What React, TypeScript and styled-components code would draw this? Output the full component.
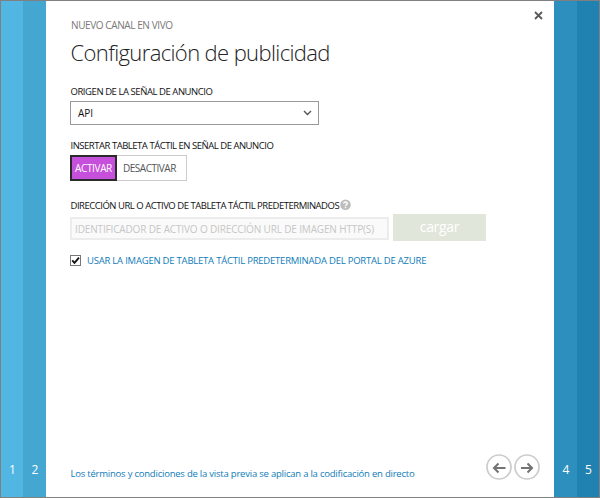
import React, { useState } from "react";
import styled, { createGlobalStyle } from "styled-components";

const GlobalStyle = createGlobalStyle`
  * { box-sizing: border-box; }
  body { margin: 0; }
  button, input { font: inherit; margin: 0; }
`;

const Frame = styled.div`
  display: flex;
  width: 600px;
  height: 498px;
  border: 1px solid #808080;
  background: #fff;
  font-family: "Open Sans", "Noto Sans", sans-serif;
  font-size: 10px;
  line-height: 14px;
  color: #111;
  overflow: hidden;
  white-space: nowrap;
`;

const Step = styled.div<{ $color: string; $width: number }>`
  display: flex;
  flex: none;
  align-items: flex-end;
  justify-content: center;
  width: ${(p) => p.$width}px;
  padding: 0 0 19px 1px;
  background: ${(p) => p.$color};
  color: #fff;
  font-size: 12px;
  line-height: 16px;
`;

const Panel = styled.main`
  display: flex;
  flex: 1;
  flex-direction: column;
  min-width: 0;
  padding: 9px 14px 16px 24px;
`;

const Header = styled.header`
  display: flex;
  justify-content: space-between;
  height: 61px;
  margin-right: -5px;
`;

const Eyebrow = styled.div`
  padding: 8px 0 0 1px;
  color: #777;
  letter-spacing: -0.4px;
`;

const Title = styled.h1`
  margin: 5px 0 0;
  padding-left: 0.5px;
  font-size: 22px;
  font-weight: 300;
  line-height: 30px;
  color: #222;
  letter-spacing: -0.62px;
`;

const CloseButton = styled.button`
  display: flex;
  width: 12px;
  height: 12px;
  padding: 0;
  border: 0;
  background: none;
`;

const Field = styled.section<{ $height: number }>`
  height: ${(p) => p.$height}px;
  padding-top: 14px;
`;

const Label = styled.div<{ $spacing: number }>`
  display: flex;
  align-items: center;
  height: 14px;
  padding-left: 0.5px;
  font-size: 9.5px;
  letter-spacing: ${(p) => p.$spacing}px;
`;

const Select = styled.div`
  display: flex;
  align-items: center;
  justify-content: space-between;
  width: 249px;
  height: 24px;
  margin-top: 2px;
  padding: 0 6px 0 7px;
  border: 1px solid #999;
`;

const Toggle = styled.div`
  display: flex;
  width: 117px;
  height: 26px;
  margin-top: 2px;
`;

const Option = styled.button<{ $on: boolean }>`
  flex: ${(p) => (p.$on ? "none" : "1")};
  width: 47px;
  padding: 0 0 0 ${(p) => (p.$on ? 3 : 6)}px;
  border: ${(p) => (p.$on ? "2px solid #2a2a2a" : "1px solid #ccc")};
  border-left-width: ${(p) => (p.$on ? 2 : 0)}px;
  background: ${(p) => (p.$on ? "#c64fdb" : "#fff")};
  color: ${(p) => (p.$on ? "#fff" : "#555")};
  text-align: left;
  letter-spacing: ${(p) => (p.$on ? -0.35 : -0.48)}px;
`;

const UploadRow = styled.div`
  display: flex;
  align-items: center;
  gap: 4px;
  margin-top: 1px;
`;

const UrlInput = styled.input`
  width: 319px;
  height: 23px;
  margin-top: 2px;
  padding: 0 3px;
  border: 2px solid #ececec;
  background: #fafafa;
  outline: none;
  letter-spacing: -0.15px;
  &::placeholder { color: #c6c6c6; opacity: 1; }
`;

const UploadButton = styled.button`
  width: 93px;
  height: 27px;
  padding: 0 0 1px;
  border: 0;
  background: #e0e6da;
  color: #fff;
  font-size: 14px;
  line-height: 20px;
  letter-spacing: -0.3px;
`;

const CheckRow = styled.div`
  display: flex;
  align-items: center;
  gap: 6px;
  height: 14px;
  margin-top: 12px;
  color: #0f7cb9;
  font-size: 9.5px;
  letter-spacing: -0.22px;
`;

const CheckText = styled.span`
  padding-top: 2px;
`;

const Footer = styled.footer`
  display: flex;
  align-items: flex-end;
  justify-content: space-between;
  margin-top: auto;
`;

const TermsLink = styled.div`
  padding-left: 0.5px;
  color: #0f7cb9;
  font-size: 9.5px;
  letter-spacing: -0.22px;
`;

const Nav = styled.div`
  display: flex;
  gap: 2px;
  margin: 0 0.5px 1px 0;
`;

const NavButton = styled.button`
  display: flex;
  width: 26px;
  height: 26px;
  padding: 0;
  border: 0;
  background: none;
`;

const CloseIcon = () => (
  <svg width="12" height="12" viewBox="0 0 12 12" fill="none" stroke="#5a5a5a" strokeWidth="1.8">
    <path d="M2 2 9 9M9 2 2 9" />
  </svg>
);

const ChevronIcon = () => (
  <svg width="9" height="6" viewBox="0 0 9 6" fill="none" stroke="#555" strokeWidth="1.4">
    <path d="M1 1 4.5 4.5 8 1" />
  </svg>
);

const HelpIcon = () => (
  <svg width="12" height="14" viewBox="0 0 12 14">
    <circle cx="6.5" cy="5.7" r="5.3" fill="#bdbdbd" />
    <path d="M4.7 4.5C4.8 2.5 8.3 2.5 8.3 4.5 8.3 5.8 6.5 5.7 6.5 7M6.5 7.8V9.2" fill="none" stroke="#fff" strokeWidth="1.5" />
  </svg>
);

const CheckIcon = () => (
  <svg width="11" height="11" viewBox="0 0 11 11" fill="none">
    <rect x=".5" y=".5" width="10" height="10" fill="#fff" stroke="#777" />
    <path d="M2.2 5.3 4.5 7.9 9 2.6" stroke="#111" strokeWidth="1.8" />
  </svg>
);

const ArrowIcon = ({ forward }: { forward?: boolean }) => (
  <svg width="26" height="26" viewBox="0 0 26 26" fill="none">
    <circle cx="13" cy="13" r="12" stroke="#ccc" strokeWidth="1.7" />
    <path
      d={forward ? "M7 14H18M13.5 9.5 18 14 13.5 18.5" : "M19.5 14H8M12.5 9.5 8 14 12.5 18.5"}
      stroke="#747474"
      strokeWidth="2.1"
    />
  </svg>
);

export default function App() {
  const [enabled, setEnabled] = useState(true);
  return (
    <>
      <GlobalStyle />
      <Frame>
        <Step $color="#51b6e1" $width={22}>1</Step>
        <Step $color="#43a7d2" $width={23}>2</Step>
        <Panel>
          <Header>
            <div>
              <Eyebrow>NUEVO CANAL EN VIVO</Eyebrow>
              <Title>Configuración de publicidad</Title>
            </div>
            <CloseButton aria-label="Cerrar"><CloseIcon /></CloseButton>
          </Header>
          <Field $height={54}>
            <Label $spacing={-0.44}>ORIGEN DE LA SEÑAL DE ANUNCIO</Label>
            <Select>
              <span>API</span>
              <ChevronIcon />
            </Select>
          </Field>
          <Field $height={60}>
            <Label $spacing={-0.48}>INSERTAR TABLETA TÁCTIL EN SEÑAL DE ANUNCIO</Label>
            <Toggle>
              <Option $on={enabled} onClick={() => setEnabled(true)}>ACTIVAR</Option>
              <Option $on={!enabled} onClick={() => setEnabled(false)}>DESACTIVAR</Option>
            </Toggle>
          </Field>
          <Field $height={80}>
            <Label $spacing={-0.48}>
              DIRECCIÓN URL O ACTIVO DE TABLETA TÁCTIL PREDETERMINADOS
              <HelpIcon />
            </Label>
            <UploadRow>
              <UrlInput placeholder="IDENTIFICADOR DE ACTIVO O DIRECCIÓN URL DE IMAGEN HTTP(S)" />
              <UploadButton>cargar</UploadButton>
            </UploadRow>
            <CheckRow>
              <CheckIcon />
              <CheckText>USAR LA IMAGEN DE TABLETA TÁCTIL PREDETERMINADA DEL PORTAL DE AZURE</CheckText>
            </CheckRow>
          </Field>
          <Footer>
            <TermsLink>Los términos y condiciones de la vista previa se aplican a la codificación en directo</TermsLink>
            <Nav>
              <NavButton aria-label="Anterior"><ArrowIcon /></NavButton>
              <NavButton aria-label="Siguiente"><ArrowIcon forward /></NavButton>
            </Nav>
          </Footer>
        </Panel>
        <Step $color="#2c8fbd" $width={23}>4</Step>
        <Step $color="#1f82b0" $width={22}>5</Step>
      </Frame>
    </>
  );
}
